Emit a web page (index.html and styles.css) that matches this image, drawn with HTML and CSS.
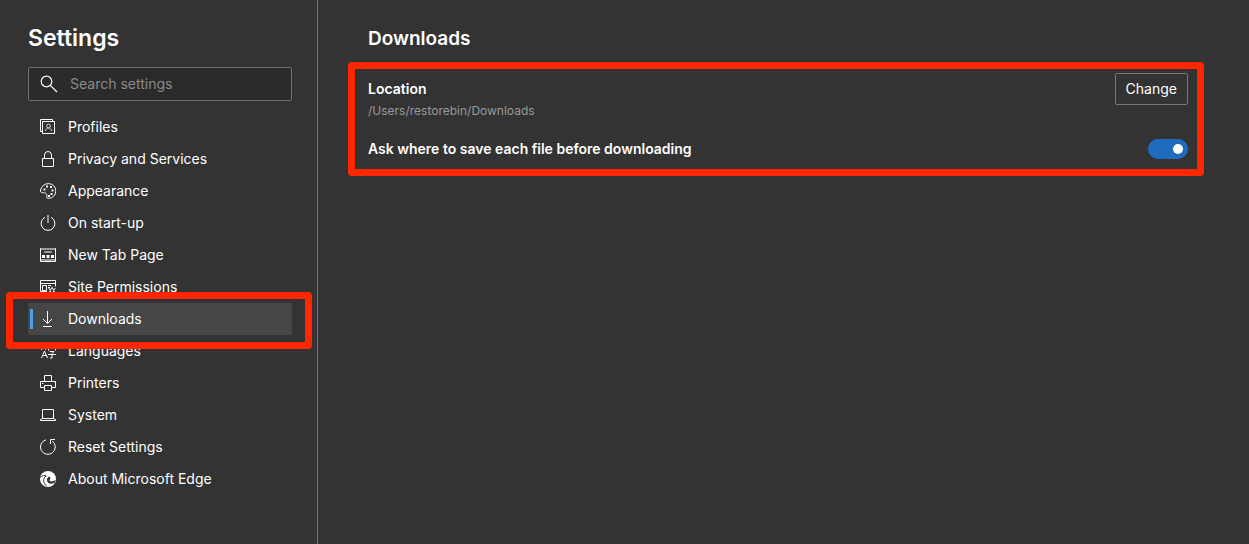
FILE: index.html
```html
<!DOCTYPE html>
<html lang="en">
<head>
<meta charset="utf-8">
<title>Settings - Downloads</title>
<link rel="stylesheet" href="styles.css">
</head>
<body>
<div class="page">
  <aside class="sidebar">
    <h1 class="title">Settings</h1>
    <label class="search">
      <svg class="search-icon" viewBox="0 0 18 18" aria-hidden="true"><circle cx="6.500" cy="6.500" r="5.300"/><path d="M10.300 10.300L17 17"/></svg>
      <input class="search-input" type="text" placeholder="Search settings" aria-label="Search settings">
    </label>
    <nav class="nav">
      <a class="item" href="#"><svg class="icon" viewBox="0 0 16 16" aria-hidden="true"><path d="M2.500 12.500H.5V.5h12v2"/><path d="M2.500 2.500h12v12h-12z"/><circle class="thin" cx="8.500" cy="7" r="1.900"/><path class="thin" d="M5.500 12c0-4 6-4 6 0"/></svg>Profiles</a>
      <a class="item" href="#"><svg class="icon" viewBox="0 0 16 16" aria-hidden="true"><path d="M2.500 7.500h11v8h-11zM4.500 7.500V4a3.500 3.500 0 0 1 7 0v3.500"/></svg>Privacy and Services</a>
      <a class="item" href="#"><svg class="icon" viewBox="0 0 16 16" aria-hidden="true"><path d="M8.500.6a7.400 7.400 0 0 1 0 14.800c-3 0-1-3-2-4.300S4 9.500 2.500 9.700 .3 8.500.6 7A8 8 0 0 1 8.500.6z"/><path class="solid" d="M3.500 5.500h2v2h-2zM6 2.500h2v2H6zM10 3h2v2h-2zM11.500 6.500h2v2h-2zM10.500 10h2v2h-2zM8 12h2v2H8z"/></svg>Appearance</a>
      <a class="item" href="#"><svg class="icon" viewBox="0 0 16 16" aria-hidden="true"><path d="M5 2.300a6.900 6.900 0 1 0 6 0"/><path class="gray" d="M8 0v8"/></svg>On start-up</a>
      <a class="item" href="#"><svg class="icon" viewBox="0 0 16 16" aria-hidden="true"><path d="M.5 1.500h15v13H.5z"/><path class="gray" d="M4 5h8M1 13h14M1 2h14"/><path class="solid" d="M2 8h3v3H2zM6.500 8h3v3h-3zM11 8h3v3h-3z"/></svg>New Tab Page</a>
      <a class="item" href="#"><svg class="icon" viewBox="0 0 16 16" aria-hidden="true"><path d="M7 12.500H.5v-11h15v6M.5 4.500h15M2.500 6.500h4v5h-4zM8 6.500h3M8 8.500h2"/><circle cx="12" cy="11.500" r="2"/><path d="M12 7.500v2M12 13.500v2M8.500 9.500l2 1M13.500 12.500l2 1M8.500 13.500l2-1M13.500 10.500l2-1"/></svg>Site Permissions</a>
      <a class="item current" href="#" aria-current="page"><svg class="icon" viewBox="0 0 16 16" aria-hidden="true"><path d="M7.500 0v12M3 8l4.500 4.500L12 8M3 15.500h9"/></svg>Downloads</a>
      <a class="item" href="#"><svg class="icon" viewBox="0 0 16 16" aria-hidden="true"><path d="M1 3.500h6M4 1.500v2M1 6.500l4-2M3 4.500l3 2"/><path d="M1.500 15l3-7 3 7M2.500 12.500h4"/><path d="M8.500 7.500v-2h7v2M12 4v1.500M9.500 8.500h4.500l-2 2v4.500h-2M8 11.500h8"/></svg>Languages</a>
      <a class="item" href="#"><svg class="icon" viewBox="0 0 16 16" aria-hidden="true"><path d="M4.500 6.500v-6h7v6M4.500 12.500h-4v-6h15v6h-4M4.500 10.500h7v5h-7z"/><path class="solid" d="M2 8h1.500v1H2z"/></svg>Printers</a>
      <a class="item" href="#"><svg class="icon" viewBox="0 0 16 16" aria-hidden="true"><path d="M2.500 11.500v-9h11v9M2.500 11.500L.5 12.500v1h15v-1l-2-1z"/></svg>System</a>
      <a class="item" href="#"><svg class="icon" viewBox="0 0 16 16" aria-hidden="true"><path d="M6 .8A7.400 7.400 0 1 0 12.500 2.200"/><path d="M15 .5h-4.500V5"/></svg>Reset Settings</a>
      <a class="item" href="#"><svg class="icon" viewBox="0 0 16 16" aria-hidden="true"><circle class="solid" cx="8" cy="8" r="8"/><path class="cut" d="M0 6.500C2 4.500 4.500 4.200 6.500 5M6 5C2.500 7.500 3 12 6.500 15"/><path class="hole" d="M9 5.500c1.800.7 1.800 2.500.6 3.600-.4 1.800 3.400 1.800 5.900-.3l-.8 2.700c-3.500 2.500-7.700.8-7.700-2.500 0-1.400.8-2.500 2-3.500z"/></svg>About Microsoft Edge</a>
    </nav>
  </aside>
  <main class="main">
    <h2 class="heading">Downloads</h2>
    <section class="panel">
      <div class="row">
        <div class="info">
          <h3 class="label">Location</h3>
          <p class="path">/Users/restorebin/Downloads</p>
        </div>
        <button class="change" type="button">Change</button>
      </div>
      <div class="row ask">
        <label class="label" for="ask">Ask where to save each file before downloading</label>
        <input class="toggle" id="ask" type="checkbox" role="switch" checked>
      </div>
    </section>
  </main>
</div>
</body>
</html>
```
FILE: styles.css
```css
* { box-sizing: border-box; }
body {
  margin: 0;
  background: #333;
  color: #fff;
  font: 14px/20px Inter, "Liberation Sans", sans-serif;
}
h1, h2, h3, p { margin: 0; }
.page { display: flex; min-height: 100vh; }
.sidebar {
  flex: 0 0 318px;
  min-width: 0;
  padding: 22px 25px 22px 28px;
  border-right: 1px solid #767676;
}
.title { font-size: 23px; line-height: 32px; font-weight: 600; }
.search {
  display: flex;
  align-items: center;
  gap: 12px;
  height: 34px;
  margin: 13px 0 10px;
  padding: 0 11px;
  background: #2b2b2b;
  border: 1px solid #6e6e6e;
  border-radius: 2px;
}
.search-icon { width: 18px; height: 18px; flex: none; fill: none; stroke: #fff; stroke-width: 1.2; }
.search-input {
  flex: 1;
  width: 100%;
  min-width: 0;
  padding: 0;
  border: 0;
  outline: 0;
  background: none;
  color: #fff;
  font: inherit;
}
.search-input::placeholder { color: #8a8a8a; opacity: 1; }
.item {
  position: relative;
  display: flex;
  align-items: center;
  gap: 12px;
  height: 32px;
  padding-left: 12px;
  border-radius: 2px;
  color: #fff;
  text-decoration: none;
}
.icon { width: 16px; height: 16px; flex: none; fill: none; stroke: #fff; stroke-width: 1; }
.icon .thin { stroke: #ccc; }
.icon .gray { stroke: #999; stroke-width: 2; }
.icon .solid { fill: #fff; stroke: none; }
.icon .cut { stroke: #333; stroke-width: 1; }
.icon .hole { fill: #333; stroke: none; }
.current { background: #464646; }
.current::before {
  content: "";
  position: absolute;
  left: 2px;
  top: 6px;
  bottom: 6px;
  width: 3px;
  background: #4ba0e8;
}
.current::after {
  content: "";
  position: absolute;
  z-index: 1;
  inset: -11px -20px -14px -22px;
  border: 7px solid #ff2600;
  border-radius: 4px;
  pointer-events: none;
}
.main { flex: 1; min-width: 0; padding: 24px 45px 24px 30px; }
.heading { padding-left: 20px; font-size: 19px; line-height: 30px; font-weight: 600; }
.panel {
  margin-top: 8px;
  padding: 4px 9px 10px 13px;
  border: 7px solid #ff2600;
  border-radius: 4px;
}
.row { display: flex; align-items: center; justify-content: space-between; gap: 16px; }
.info { padding-top: 6px; }
.label { font-size: 14px; line-height: 20px; font-weight: 600; }
.path { margin-top: 2px; color: #999; font-size: 12px; line-height: 20px; }
.change {
  align-self: flex-start;
  height: 32px;
  padding: 0 10px;
  background: transparent;
  border: 1px solid #767676;
  border-radius: 2px;
  color: #fff;
  font: inherit;
}
.ask { margin-top: 18px; }
.toggle {
  appearance: none;
  display: flex;
  align-items: center;
  justify-content: flex-end;
  width: 40px;
  height: 20px;
  margin: 0;
  padding: 0 5px;
  border-radius: 10px;
  background: #1f6cbf;
}
.toggle::before { content: ""; width: 10px; height: 10px; border-radius: 50%; background: #fff; }
.toggle:not(:checked) { justify-content: flex-start; background: #767676; }
```
